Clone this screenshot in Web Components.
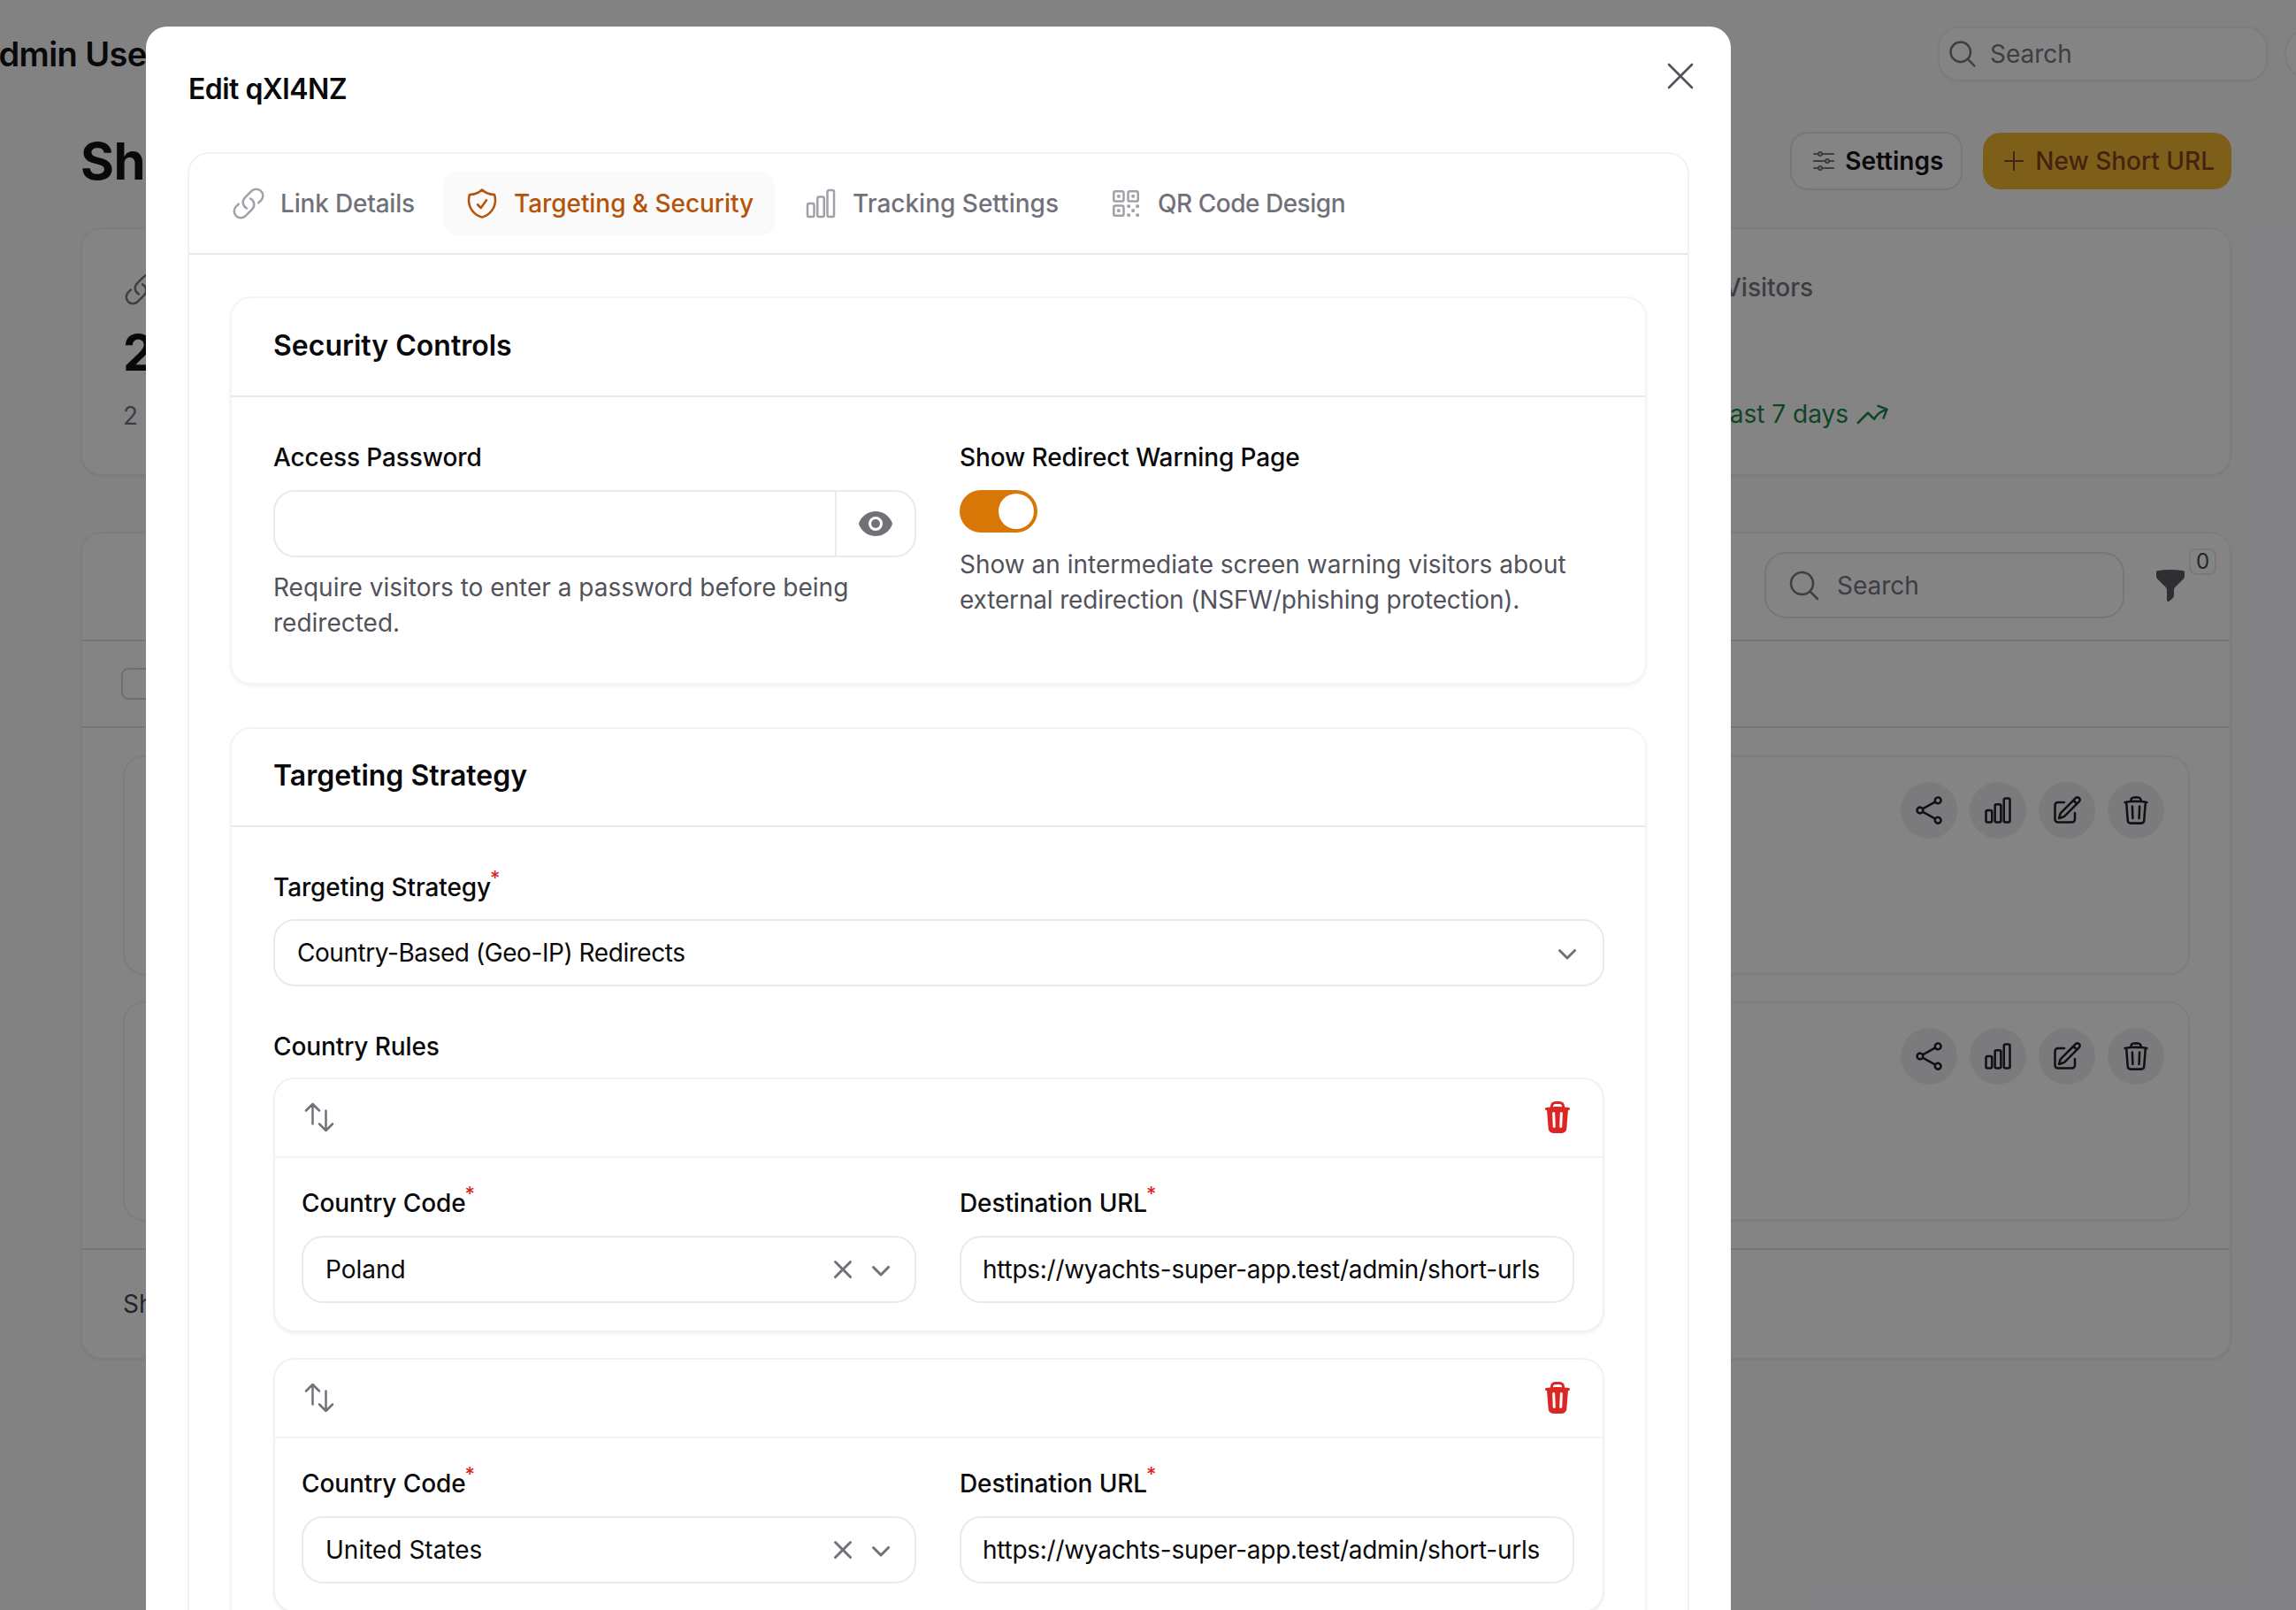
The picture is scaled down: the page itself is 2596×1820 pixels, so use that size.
<!doctype html>
<html lang="en">
<head>
<meta charset="utf-8">
<title>Short URLs</title>
<style>
  html, body { margin: 0; padding: 0; width: 2596px; height: 1820px; overflow: hidden; }
  body { font-family: Inter, "Noto Sans", sans-serif; font-size: 28px; color: #09090b; position: relative; }
  .grid { display: grid; grid-template-columns: 727px 1fr; column-gap: 49px; }
</style>
</head>
<body>

<short-urls-page></short-urls-page>

<edit-modal heading="Edit qXl4NZ">
  <tab-bar>
    <tab-item icon="link" style="letter-spacing: -.19px">Link Details</tab-item>
    <tab-item icon="shield" active style="letter-spacing: -.06px">Targeting &amp; Security</tab-item>
    <tab-item icon="chart" style="letter-spacing: 0">Tracking Settings</tab-item>
    <tab-item icon="qr" style="letter-spacing: -.48px">QR Code Design</tab-item>
  </tab-bar>

  <section-card heading="Security Controls" style="--header: 112px">
    <div class="grid">
      <div>
        <field-label>Access Password</field-label>
        <text-box password></text-box>
        <hint-text style="margin-top: 14px">Require visitors to enter a password before being redirected.</hint-text>
      </div>
      <div>
        <field-label>Show Redirect Warning Page</field-label>
        <toggle-switch></toggle-switch>
        <hint-text style="margin-top: 16px">Show an intermediate screen warning visitors about <span style="letter-spacing: -.16px">external redirection (NSFW/phishing protection).</span></hint-text>
      </div>
    </div>
  </section-card>

  <section-card heading="Targeting Strategy" style="--header: 111.5px; margin-top: 47.5px">
    <field-label required style="--gap: 15.5px">Targeting Strategy</field-label>
    <select-box style="letter-spacing: -.44px">Country-Based (Geo-IP) Redirects</select-box>
    <field-label style="margin-top: 48px; --gap: 15px">Country Rules</field-label>
    <country-rule country="Poland" url="https://wyachts-super-app.test/admin/short-urls"></country-rule>
    <country-rule country="United States" url="https://wyachts-super-app.test/admin/short-urls" style="margin-top: 29px"></country-rule>
  </section-card>
</edit-modal>

<script>
// heroicons paths, outline ones on a 24 box and solid ones on a 20 box
const ICONS = {
  link: { d: 'M13.19 8.688a4.5 4.5 0 0 1 1.242 7.244l-4.5 4.5a4.5 4.5 0 0 1-6.364-6.364l1.757-1.757m13.35-.622 1.757-1.757a4.5 4.5 0 0 0-6.364-6.364l-4.5 4.5a4.5 4.5 0 0 0 1.242 7.244' },
  shield: { d: 'M9 12.75 11.25 15 15 9.75m-3-7.036A11.959 11.959 0 0 1 3.598 6 11.99 11.99 0 0 0 3 9.749c0 5.592 3.824 10.29 9 11.623 5.176-1.332 9-6.03 9-11.622 0-1.31-.21-2.571-.598-3.751h-.152c-3.196 0-6.1-1.248-8.25-3.285Z' },
  chart: { d: 'M3 13.125C3 12.504 3.504 12 4.125 12h2.25c.621 0 1.125.504 1.125 1.125v6.75C7.5 20.496 6.996 21 6.375 21h-2.25A1.125 1.125 0 0 1 3 19.875v-6.75ZM9.75 8.625c0-.621.504-1.125 1.125-1.125h2.25c.621 0 1.125.504 1.125 1.125v11.25c0 .621-.504 1.125-1.125 1.125h-2.25a1.125 1.125 0 0 1-1.125-1.125V8.625ZM16.5 4.125c0-.621.504-1.125 1.125-1.125h2.25C20.496 3 21 3.504 21 4.125v15.75c0 .621-.504 1.125-1.125 1.125h-2.25a1.125 1.125 0 0 1-1.125-1.125V4.125Z' },
  qr: { d: 'M3.75 4.875c0-.621.504-1.125 1.125-1.125h4.5c.621 0 1.125.504 1.125 1.125v4.5c0 .621-.504 1.125-1.125 1.125h-4.5A1.125 1.125 0 0 1 3.75 9.375v-4.5ZM3.75 14.625c0-.621.504-1.125 1.125-1.125h4.5c.621 0 1.125.504 1.125 1.125v4.5c0 .621-.504 1.125-1.125 1.125h-4.5a1.125 1.125 0 0 1-1.125-1.125v-4.5ZM13.5 4.875c0-.621.504-1.125 1.125-1.125h4.5c.621 0 1.125.504 1.125 1.125v4.5c0 .621-.504 1.125-1.125 1.125h-4.5A1.125 1.125 0 0 1 13.5 9.375v-4.5ZM6.75 6.75h.75v.75h-.75v-.75ZM6.75 16.5h.75v.75h-.75v-.75ZM16.5 6.75h.75v.75h-.75v-.75ZM13.5 13.5h.75v.75h-.75v-.75ZM13.5 19.5h.75v.75h-.75v-.75ZM19.5 13.5h.75v.75h-.75v-.75ZM19.5 19.5h.75v.75h-.75v-.75ZM16.5 16.5h.75v.75h-.75v-.75Z' },
  close: { d: 'M6 18 18 6M6 6l12 12' },
  arrows: { d: 'M3 7.5 7.5 3m0 0L12 7.5M7.5 3v13.5m13.5 0L16.5 21m0 0L12 16.5m4.5 4.5V7.5' },
  search: { d: 'm21 21-5.197-5.197m0 0A7.5 7.5 0 1 0 5.196 5.196a7.5 7.5 0 0 0 10.607 10.607Z' },
  share: { d: 'M7.217 10.907a2.25 2.25 0 1 0 0 2.186m0-2.186c.18.324.283.696.283 1.093s-.103.77-.283 1.093m0-2.186 9.566-5.314m-9.566 7.5 9.566 5.314m0 0a2.25 2.25 0 1 0 3.935 2.186 2.25 2.25 0 0 0-3.935-2.186Zm0-12.814a2.25 2.25 0 1 0 3.933-2.185 2.25 2.25 0 0 0-3.933 2.185Z' },
  edit: { d: 'm16.862 4.487 1.687-1.688a1.875 1.875 0 1 1 2.652 2.652L10.582 16.07a4.5 4.5 0 0 1-1.897 1.13L6 18l.8-2.685a4.5 4.5 0 0 1 1.13-1.897l8.932-8.931Zm0 0L19.5 7.125M18 14v4.75A2.25 2.25 0 0 1 15.75 21H5.25A2.25 2.25 0 0 1 3 18.75V8.25A2.25 2.25 0 0 1 5.25 6H10' },
  trash: { d: 'm14.74 9-.346 9m-4.788 0L9.26 9m9.968-3.21c.342.052.682.107 1.022.166m-1.022-.165L18.16 19.673a2.25 2.25 0 0 1-2.244 2.077H8.084a2.25 2.25 0 0 1-2.244-2.077L4.772 5.79m14.456 0a48.108 48.108 0 0 0-3.478-.397m-12 .562c.34-.059.68-.114 1.022-.165m0 0a48.11 48.11 0 0 1 3.478-.397m7.5 0v-.916c0-1.18-.91-2.164-2.09-2.201a51.964 51.964 0 0 0-3.32 0c-1.18.037-2.09 1.022-2.09 2.201v.916m7.5 0a48.667 48.667 0 0 0-7.5 0' },
  sliders: { d: 'M10.5 6h9.75M10.5 6a1.5 1.5 0 1 1-3 0m3 0a1.5 1.5 0 1 0-3 0M3.75 6H7.5m3 12h9.75m-9.75 0a1.5 1.5 0 0 1-3 0m3 0a1.5 1.5 0 0 0-3 0m-3.75 0H7.5m9-6h3.75m-3.75 0a1.5 1.5 0 0 1-3 0m3 0a1.5 1.5 0 0 0-3 0m-9.75 0h9.75' },
  plus: { d: 'M12 4.5v15m7.5-7.5h-15' },
  trend: { d: 'M2.25 18 9 11.25l4.306 4.307a11.95 11.95 0 0 1 5.814-5.518l2.74-1.22m0 0-5.94-2.281m5.94 2.28-2.28 5.941' },
  eye: { solid: true, d: 'M10 12.5a2.5 2.5 0 1 0 0-5 2.5 2.5 0 0 0 0 5ZM.664 10.59a1.651 1.651 0 0 1 0-1.186A10.004 10.004 0 0 1 10 3c4.257 0 7.893 2.66 9.336 6.41.147.381.146.804 0 1.186A10.004 10.004 0 0 1 10 17c-4.257 0-7.893-2.66-9.336-6.41ZM14 10a4 4 0 1 1-8 0 4 4 0 0 1 8 0Z' },
  trashSolid: { solid: true, d: 'M8.75 1A2.75 2.75 0 0 0 6 3.75v.443c-.795.077-1.584.176-2.365.298a.75.75 0 1 0 .23 1.482l.149-.022.841 10.518A2.75 2.75 0 0 0 7.596 19h4.807a2.75 2.75 0 0 0 2.742-2.53l.841-10.52.149.023a.75.75 0 0 0 .23-1.482A41.03 41.03 0 0 0 14 4.193V3.75A2.75 2.75 0 0 0 11.25 1h-2.5ZM10 4c.84 0 1.673.025 2.5.075V3.75c0-.69-.56-1.25-1.25-1.25h-2.5c-.69 0-1.25.56-1.25 1.25v.325C8.327 4.025 9.16 4 10 4ZM8.58 7.72a.75.75 0 0 0-1.5.06l.3 7.5a.75.75 0 1 0 1.5-.06l-.3-7.5Zm4.34.06a.75.75 0 1 0-1.5-.06l-.3 7.5a.75.75 0 1 0 1.5.06l.3-7.5Z' },
  funnel: { solid: true, d: 'M2.628 1.601C5.028 1.206 7.49 1 10 1s4.973.206 7.372.601a.75.75 0 0 1 .628.74v2.288a2.25 2.25 0 0 1-.659 1.59l-4.682 4.683a2.25 2.25 0 0 0-.659 1.59v3.037c0 .684-.31 1.33-.844 1.757l-1.937 1.55A.75.75 0 0 1 8 18.25v-5.757a2.25 2.25 0 0 0-.659-1.591L2.659 6.22A2.25 2.25 0 0 1 2 4.629V2.34a.75.75 0 0 1 .628-.74Z' },
  chevron: { solid: true, d: 'M5.22 8.22a.75.75 0 0 1 1.06 0L10 11.94l3.72-3.72a.75.75 0 1 1 1.06 1.06l-4.25 4.25a.75.75 0 0 1-1.06 0L5.22 9.28a.75.75 0 0 1 0-1.06Z' },
  clear: { solid: true, d: 'M6.28 5.22a.75.75 0 0 0-1.06 1.06L8.94 10l-3.72 3.72a.75.75 0 1 0 1.06 1.06L10 11.06l3.72 3.72a.75.75 0 1 0 1.06-1.06L11.06 10l3.72-3.72a.75.75 0 0 0-1.06-1.06L10 8.94 6.28 5.22Z' }
};

class UiIcon extends HTMLElement {
  connectedCallback() {
    const icon = ICONS[this.getAttribute('name')];
    const size = this.getAttribute('size') || 40;
    const paint = icon.solid
      ? `fill="currentColor" fill-rule="evenodd" clip-rule="evenodd"`
      : `fill="none" stroke="currentColor" stroke-width="${this.getAttribute('stroke') || 1.5}" stroke-linecap="round" stroke-linejoin="round"`;
    this.attachShadow({ mode: 'open' }).innerHTML = `
      <style>:host { display: inline-flex; flex: none; } svg { display: block; }</style>
      <svg width="${size}" height="${size}" viewBox="0 0 ${icon.solid ? 20 : 24} ${icon.solid ? 20 : 24}" ${paint}><path d="${icon.d}"/></svg>`;
  }
}

// the page behind the modal, most of it is only seen at the edges
class ShortUrlsPage extends HTMLElement {
  constructor() {
    super();
    const row = () => `
      <div class="row">
        <div class="acts">
          <span class="act"><ui-icon name="share" size="36" stroke="1.7"></ui-icon></span>
          <span class="act"><ui-icon name="chart" size="36" stroke="1.7"></ui-icon></span>
          <span class="act"><ui-icon name="edit" size="36" stroke="1.7"></ui-icon></span>
          <span class="act"><ui-icon name="trash" size="36" stroke="1.7"></ui-icon></span>
        </div>
      </div>`;
    this.attachShadow({ mode: 'open' }).innerHTML = `
      <style>
        :host { display: block; width: 2596px; height: 1820px; overflow: hidden; background: #fafafb; box-sizing: border-box; }
        * { box-sizing: border-box; }
        .top { display: flex; align-items: center; height: 122px; }
        .app { font-size: 38px; font-weight: 600; letter-spacing: -.6px; margin-left: -28px; white-space: nowrap; }
        .top-search { margin-left: auto; width: 373px; height: 62px; display: flex; align-items: center; gap: 13px; padding-left: 8px; background: #fff; border: 2px solid #eeeef0; border-radius: 24px; color: #71717a; box-shadow: 0 1px 2px rgba(0,0,0,.05); }
        .avatar { width: 62px; height: 62px; border-radius: 50%; margin: 0 -49px 0 19px; flex: none; background: #fff; border: 2px solid #eeeef0; }
        .head { display: flex; align-items: center; height: 68px; margin: 26px 73px 0 91px; }
        h1 { margin: 0; font-size: 58px; line-height: 68px; font-weight: 700; letter-spacing: -.6px; }
        .btn { display: flex; align-items: center; gap: 8px; border-radius: 20px; font-weight: 600; }
        .settings { margin-left: auto; height: 66px; padding: 0 20px; background: #fff; border: 2px solid #e4e4e7; }
        .settings ui-icon { color: #71717a; }
        .new { margin-left: 23px; height: 64px; padding: 0 19px 0 19px; background: #f1b527; color: #833d15; font-weight: 500; }
        .card { background: #fff; border: 2px solid #f1f1f2; border-radius: 24px; margin: 0 73px 0 91px; box-shadow: 0 1px 2px rgba(0,0,0,.06); }
        .stats { display: grid; grid-template-columns: 1fr 581px; height: 281px; margin-top: 41px; padding: 48px 0 0 46px; color: #71717a; }
        .line { height: 40px; line-height: 40px; display: flex; align-items: center; }
        .num { height: 60px; line-height: 60px; margin: 22px 0 21px; font-size: 56px; font-weight: 700; color: #09090b; }
        .good { color: #16803d; gap: 7px; }
        .v { padding-left: 9px; margin-top: -2px; margin-bottom: 2px; font-weight: 500; }
        .table { height: 936px; margin-top: 63px; }
        .tools { display: flex; align-items: flex-start; height: 122px; padding: 21px 47px 0 0; border-bottom: 2px solid #e4e4e7; justify-content: flex-end; }
        .tools-search { width: 407px; height: 75px; display: flex; align-items: center; gap: 17px; padding-left: 23px; border: 2px solid #e4e4e7; border-radius: 24px; color: #71717a; }
        .funnel { position: relative; margin: 18px 0 0 32px; color: #52525b; }
        .badge { position: absolute; left: 41px; top: -22px; width: 31px; height: 30px; border: 2px solid #e8e8ea; border-radius: 8px; font-size: 24px; line-height: 26px; text-align: center; color: #3f3f46; }
        .bar { display: flex; align-items: center; height: 98px; padding-left: 44px; border-bottom: 2px solid #e4e4e7; }
        .check { width: 36px; height: 36px; border: 2px solid #d4d4d8; border-radius: 8px; background: #fff; }
        .rows { display: flex; flex-direction: column; gap: 30px; padding: 31px 45px 31px 46px; border-bottom: 2px solid #e4e4e7; }
        .row { height: 248px; border: 2px solid #f1f1f2; border-radius: 24px; box-shadow: 0 1px 2px rgba(0,0,0,.06); padding: 28px 27px 0 0; }
        .acts { display: flex; justify-content: flex-end; gap: 14px; }
        .act { width: 64px; height: 64px; border-radius: 50%; background: #ededee; display: flex; align-items: center; justify-content: center; color: #18181b; }
        .foot { height: 121px; padding-left: 46px; display: flex; align-items: center; color: #3f3f46; }
      </style>
      <div class="top">
        <div class="app">Admin Users</div>
        <div class="top-search"><ui-icon name="search" size="36" stroke="1.6"></ui-icon>Search</div>
        <div class="avatar"></div>
      </div>
      <div class="head">
        <h1>Short URLs</h1>
        <div class="btn settings"><ui-icon name="sliders" size="32"></ui-icon>Settings</div>
        <div class="btn new"><ui-icon name="plus" size="32"></ui-icon>New Short URL</div>
      </div>
      <div class="card stats">
        <div>
          <div class="line"><ui-icon name="link"></ui-icon></div>
          <div class="num">2</div>
          <div class="line">2 active</div>
        </div>
        <div>
          <div class="line v">Visitors</div>
          <div class="num"></div>
          <div class="line good">Last 7 days <ui-icon name="trend"></ui-icon></div>
        </div>
      </div>
      <div class="card table">
        <div class="tools">
          <div class="tools-search"><ui-icon name="search" stroke="1.5"></ui-icon>Search</div>
          <div class="funnel"><ui-icon name="funnel"></ui-icon><span class="badge">0</span></div>
        </div>
        <div class="bar"><span class="check"></span></div>
        <div class="rows">${row()}${row()}</div>
        <div class="foot">Showing 1 to 2 of 2 results</div>
      </div>`;
  }
}

class EditModal extends HTMLElement {
  connectedCallback() {
    this.attachShadow({ mode: 'open' }).innerHTML = `
      <style>
        :host { position: absolute; inset: 0; display: block; overflow: hidden; background: rgba(9, 9, 11, .5); }
        * { box-sizing: border-box; }
        .dialog { width: 1792px; height: 1900px; margin: 30px 0 0 165px; background: #fff; border-radius: 24px; padding: 0 47px; }
        header { display: flex; justify-content: space-between; align-items: flex-start; height: 142px; }
        h2 { margin: 47px 0 0 1px; font-size: 32px; line-height: 48px; font-weight: 600; letter-spacing: -.54px; }
        .close { margin: 30px -16px 0 0; color: #52525b; }
        .tabs { border: 2px solid #f2f2f3; border-radius: 24px; height: 1800px; }
      </style>
      <div class="dialog">
        <header>
          <h2>${this.getAttribute('heading')}</h2>
          <ui-icon class="close" name="close" size="52" stroke="1.2"></ui-icon>
        </header>
        <div class="tabs"><slot></slot></div>
      </div>`;
  }
}

class TabBar extends HTMLElement {
  constructor() {
    super();
    this.attachShadow({ mode: 'open' }).innerHTML = `
      <style>
        :host { display: flex; gap: 8px; height: 114px; padding: 20px 23px; margin-bottom: 47px; border-bottom: 2px solid #e8e8ea; box-sizing: border-box; }
      </style>
      <slot></slot>`;
  }
}

class TabItem extends HTMLElement {
  connectedCallback() {
    this.attachShadow({ mode: 'open' }).innerHTML = `
      <style>
        :host { display: flex; align-items: center; gap: 16px; height: 72px; padding: 0 24px; border-radius: 16px; color: #71717a; font-weight: 500; white-space: nowrap; box-sizing: border-box; }
        ui-icon { color: #a1a1aa; }
        :host([active]) { background: #fafafa; color: #b45309; }
        :host([active]) ui-icon { color: #b45309; }
      </style>
      <ui-icon name="${this.getAttribute('icon')}"></ui-icon><slot></slot>`;
  }
}

class SectionCard extends HTMLElement {
  connectedCallback() {
    this.attachShadow({ mode: 'open' }).innerHTML = `
      <style>
        :host { display: block; margin: 0 46px; background: #fff; border: 2px solid #f4f4f5; border-radius: 24px; box-shadow: 0 2px 4px rgba(0, 0, 0, .05); box-sizing: border-box; }
        h3 { display: flex; align-items: center; margin: 0; padding: 0 46px 3px 47px; height: var(--header, 112px); border-bottom: 2px solid #e8e8ea; font-size: 32px; font-weight: 600; box-sizing: border-box; }
        .body { padding: 48px 46px 48px 47px; }
      </style>
      <h3>${this.getAttribute('heading')}</h3>
      <div class="body"><slot></slot></div>`;
  }
}

class FieldLabel extends HTMLElement {
  connectedCallback() {
    this.attachShadow({ mode: 'open' }).innerHTML = `
      <style>
        :host { display: block; line-height: 40px; font-weight: 500; letter-spacing: -.1px; margin-bottom: var(--gap, 17px); white-space: nowrap; }
        sup { color: #dc2626; font-size: 22px; line-height: 0; vertical-align: 13px; font-weight: 500; margin-left: -1px; }
      </style>
      <slot></slot>${this.hasAttribute('required') ? '<sup>*</sup>' : ''}`;
  }
}

class HintText extends HTMLElement {
  constructor() {
    super();
    this.attachShadow({ mode: 'open' }).innerHTML = `
      <style>:host { display: block; line-height: 40px; color: #52525b; }</style><slot></slot>`;
  }
}

class TextBox extends HTMLElement {
  connectedCallback() {
    const eye = this.hasAttribute('password')
      ? '<span class="suffix"><ui-icon name="eye"></ui-icon></span>' : '';
    this.attachShadow({ mode: 'open' }).innerHTML = `
      <style>
        :host { display: flex; align-items: stretch; height: 76px; border: 2px solid #e8eaef; border-radius: 24px; box-sizing: border-box; background: #fff; letter-spacing: -.27px; }
        .value { flex: 1; display: flex; align-items: center; padding-left: 24px; white-space: nowrap; }
        .suffix { flex: none; width: 90px; display: flex; align-items: center; justify-content: center; border-left: 2px solid #e8eaef; color: #71717a; box-sizing: border-box; }
      </style>
      <div class="value"><slot></slot></div>${eye}`;
  }
}

class SelectBox extends HTMLElement {
  connectedCallback() {
    const clear = this.hasAttribute('clearable') ? '<ui-icon class="x" name="clear"></ui-icon>' : '';
    this.attachShadow({ mode: 'open' }).innerHTML = `
      <style>
        :host { display: flex; align-items: center; height: 76px; padding: 0 20px 0 25px; border: 2px solid #e8eaef; border-radius: 24px; box-sizing: border-box; background: #fff; }
        :host([clearable]) { padding-right: 18px; }
        .value { flex: 1; white-space: nowrap; }
        ui-icon { color: #71717a; }
        .x { margin-right: 3px; }
      </style>
      <div class="value"><slot></slot></div>${clear}<ui-icon name="chevron"></ui-icon>`;
  }
}

class ToggleSwitch extends HTMLElement {
  constructor() {
    super();
    this.attachShadow({ mode: 'open' }).innerHTML = `
      <style>
        :host { display: flex; justify-content: flex-end; width: 88px; height: 48px; padding: 4px; border-radius: 24px; background: #d97706; box-sizing: border-box; }
        span { width: 40px; height: 40px; border-radius: 50%; background: #fff; }
      </style>
      <span></span>`;
  }
}

class CountryRule extends HTMLElement {
  connectedCallback() {
    this.attachShadow({ mode: 'open' }).innerHTML = `
      <style>
        :host { display: block; border: 2px solid #f1f1f3; border-radius: 24px; background: #fff; box-shadow: 0 2px 3px rgba(0, 0, 0, .05); box-sizing: border-box; }
        .bar { display: flex; justify-content: space-between; align-items: center; height: 89.5px; padding: 0 31px 0 30px; border-bottom: 2px solid #f3f3f5; box-sizing: border-box; }
        .move { color: #71717a; }
        .del { color: #dc2626; }
        .cols { display: grid; grid-template-columns: 1fr 1fr; column-gap: 49px; padding: 30.5px 32px 30.5px 30px; }
      </style>
      <div class="bar">
        <ui-icon class="move" name="arrows"></ui-icon>
        <ui-icon class="del" name="trashSolid"></ui-icon>
      </div>
      <div class="cols">
        <div>
          <field-label required style="--gap: 17.5px">Country Code</field-label>
          <select-box clearable>${this.getAttribute('country')}</select-box>
        </div>
        <div>
          <field-label required style="--gap: 17.5px">Destination URL</field-label>
          <text-box>${this.getAttribute('url')}</text-box>
        </div>
      </div>`;
  }
}

customElements.define('ui-icon', UiIcon);
customElements.define('short-urls-page', ShortUrlsPage);
customElements.define('edit-modal', EditModal);
customElements.define('tab-bar', TabBar);
customElements.define('tab-item', TabItem);
customElements.define('section-card', SectionCard);
customElements.define('field-label', FieldLabel);
customElements.define('hint-text', HintText);
customElements.define('text-box', TextBox);
customElements.define('select-box', SelectBox);
customElements.define('toggle-switch', ToggleSwitch);
customElements.define('country-rule', CountryRule);
</script>
</body>
</html>
